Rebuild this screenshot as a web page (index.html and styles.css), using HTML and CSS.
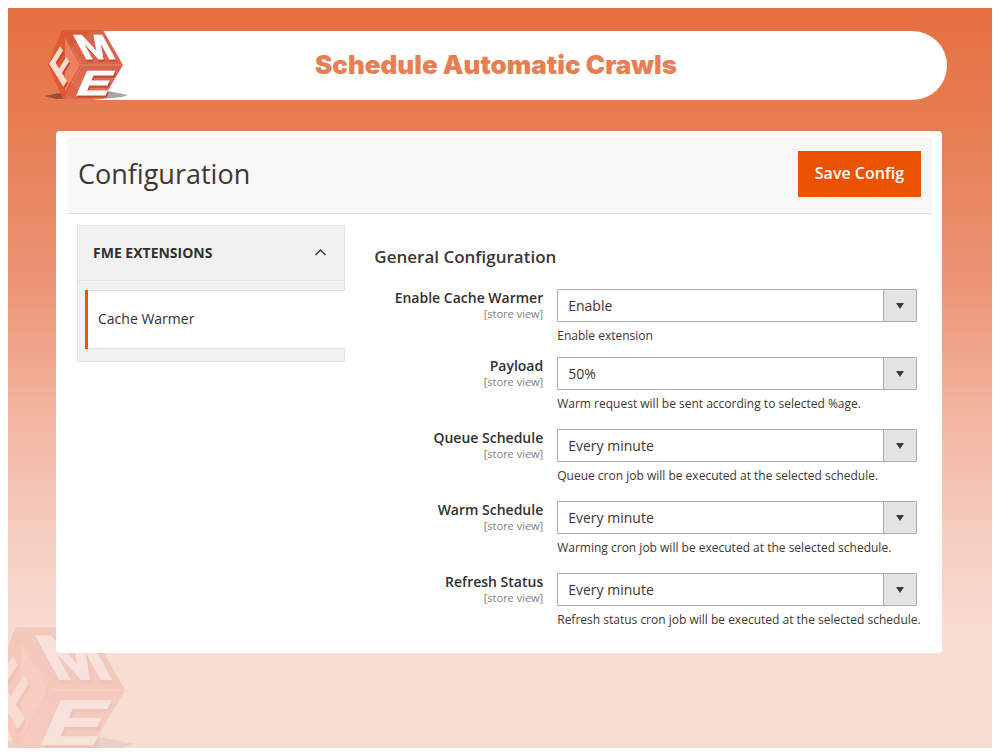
FILE: index.html
```html
<!DOCTYPE html>
<html lang="en">
<head>
<meta charset="utf-8">
<meta name="viewport" content="width=device-width, initial-scale=1">
<title>Schedule Automatic Crawls</title>
<link rel="stylesheet" href="styles.css">
</head>
<body>
<svg class="defs" aria-hidden="true">
  <linearGradient id="front" x1="0" y1="0" x2="0" y2="1"><stop offset="0" stop-color="#d9543c"/><stop offset="1" stop-color="#e0694c"/></linearGradient>
  <symbol id="cube" viewBox="44 26 86 78" overflow="visible">
    <path class="cube-shadow" d="M44 96 L66 92 V99 H56 Z M102 99 L108 91 L128 95 L122 97 Z"/>
    <path class="cube-left" d="M62 30 L82 65 L63 99 L48 65 Z"/>
    <path class="cube-top" d="M62 30 H103 L123 65 H82 Z"/>
    <path class="cube-front" d="M82 65 H123 L103 99 H63 Z"/>
    <path class="cube-inner" d="M65 38 L80 65 L65 92 Z"/>
    <path class="cube-edge" d="M82 65 H123"/>
    <g class="cube-letters">
      <text class="cube-side" transform="matrix(.62 -1 .6 .96 62 88)">F</text>
      <text transform="matrix(1.22 0 .57 1.05 84 59)">M</text>
      <text transform="matrix(1.5 0 -.45 1.05 74 95)">E</text>
    </g>
  </symbol>
</svg>
<div class="stage">
  <svg class="watermark" aria-hidden="true"><use href="#cube"/></svg>
  <header class="banner">
    <svg class="logo" role="img" aria-label="FME"><use href="#cube"/></svg>
    <h1 class="banner-title">Schedule Automatic Crawls</h1>
  </header>
  <main class="card">
    <div class="card-header">
      <h2 class="card-title">Configuration</h2>
      <button class="save" type="button">Save Config</button>
    </div>
    <div class="card-body">
      <nav class="sidebar">
        <button class="group" type="button" aria-expanded="true">
          <span>FME EXTENSIONS</span>
          <svg class="chevron" viewBox="0 0 12 8" aria-hidden="true"><path d="M1 7 L6 2 L11 7"/></svg>
        </button>
        <a class="group-item" href="#general">Cache Warmer</a>
      </nav>
      <form class="settings" id="general">
        <h3 class="settings-title">General Configuration</h3>
        <div class="row row-short">
          <label class="label" for="enable">Enable Cache Warmer <small class="scope">[store view]</small></label>
          <div class="field">
            <div class="picker"><select id="enable"><option>Enable</option></select><svg viewBox="0 0 8 6" aria-hidden="true"><path d="M0 0 H8 L4 6 Z"/></svg></div>
            <p class="note">Enable extension</p>
          </div>
        </div>
        <div class="row">
          <label class="label" for="payload">Payload <small class="scope">[store view]</small></label>
          <div class="field">
            <div class="picker"><select id="payload"><option>50%</option></select><svg viewBox="0 0 8 6" aria-hidden="true"><path d="M0 0 H8 L4 6 Z"/></svg></div>
            <p class="note">Warm request will be sent according to selected %age.</p>
          </div>
        </div>
        <div class="row">
          <label class="label" for="queue">Queue Schedule <small class="scope">[store view]</small></label>
          <div class="field">
            <div class="picker"><select id="queue"><option>Every minute</option></select><svg viewBox="0 0 8 6" aria-hidden="true"><path d="M0 0 H8 L4 6 Z"/></svg></div>
            <p class="note">Queue cron job will be executed at the selected schedule.</p>
          </div>
        </div>
        <div class="row">
          <label class="label" for="warm">Warm Schedule <small class="scope">[store view]</small></label>
          <div class="field">
            <div class="picker"><select id="warm"><option>Every minute</option></select><svg viewBox="0 0 8 6" aria-hidden="true"><path d="M0 0 H8 L4 6 Z"/></svg></div>
            <p class="note">Warming cron job will be executed at the selected schedule.</p>
          </div>
        </div>
        <div class="row">
          <label class="label" for="refresh">Refresh Status <small class="scope">[store view]</small></label>
          <div class="field">
            <div class="picker"><select id="refresh"><option>Every minute</option></select><svg viewBox="0 0 8 6" aria-hidden="true"><path d="M0 0 H8 L4 6 Z"/></svg></div>
            <p class="note">Refresh status cron job will be executed at the selected schedule.</p>
          </div>
        </div>
      </form>
    </div>
  </main>
</div>
</body>
</html>
```
FILE: styles.css
```css
* { box-sizing: border-box; }
body {
  margin: 0;
  padding: 8px;
  min-height: 100vh;
  display: flex;
  background: #fff;
  color: #41362f;
  font-family: "Open Sans", "Noto Sans", sans-serif;
}
h1, h2, h3, p { margin: 0; }
button, select { font-family: inherit; color: inherit; }
.defs { position: absolute; width: 0; height: 0; }

.stage {
  position: relative;
  flex: 1;
  padding: 23px 50px 95px 48px;
  overflow: hidden;
  background: linear-gradient(#e67040 0%, #e77f55 18%, #ec9676 38%, #f2b7a2 56%, #f6d0c2 73%, #f8ddd4 86%);
}
.watermark {
  position: absolute;
  left: -25px;
  bottom: -12px;
  width: 155px;
  height: 140px;
  overflow: visible;
  opacity: .16;
}

.banner {
  position: relative;
  display: flex;
  align-items: center;
  justify-content: center;
  height: 69px;
  margin: 0 -5px 31px 11px;
  border-radius: 35px;
  background: #fff;
}
.logo {
  position: absolute;
  left: -23px;
  top: -5px;
  width: 86px;
  height: 78px;
  overflow: visible;
}
.banner-title {
  padding: 0 22px 2px 0;
  color: #e77f54;
  font: 900 26px/32px Inter, "Liberation Sans", sans-serif;
}

.cube-shadow { fill: #000; opacity: .35; }
.cube-left { fill: #e2562c; opacity: .95; }
.cube-top { fill: #d9573a; opacity: .92; }
.cube-front { fill: url(#front); opacity: .92; }
.cube-inner { fill: #ea8260; }
.cube-edge { fill: none; stroke: #e58a6c; stroke-width: 1; }
.cube-letters {
  fill: #fff;
  stroke: #fff;
  stroke-width: 1;
  font: 700 33px "Liberation Sans", sans-serif;
  filter: drop-shadow(1px 2px 0 #c0462c);
}
.cube-side { fill: #fbdcd0; stroke: #fbdcd0; }

.card {
  position: relative;
  padding: 7px 10px 22px 11px;
  border-radius: 4px;
  background: #fff;
}
.card-header {
  display: flex;
  align-items: center;
  justify-content: space-between;
  height: 76px;
  padding: 0 11px 4px;
  border-bottom: 1px solid #e3e3e3;
  background: #f8f8f8;
}
.card-title { font-size: 27px; line-height: 40px; font-weight: 400; }
.save {
  height: 46px;
  padding: 0 17px 2px;
  border: 0;
  background: #eb5202;
  color: #fff;
  font-size: 16px;
  font-weight: 600;
}
.card-body {
  display: grid;
  grid-template-columns: minmax(180px, 45fr) minmax(0, 91fr);
  gap: 29px;
  align-items: start;
  padding: 11px 15px 0 10px;
}

.sidebar {
  padding-bottom: 12px;
  border: 1px solid #e3e3e3;
  background: #f1f1f1;
}
.group {
  display: flex;
  align-items: center;
  justify-content: space-between;
  width: 100%;
  height: 55px;
  padding: 0 17px 2px 15px;
  border: 0;
  border-bottom: 1px solid #e3e3e3;
  background: none;
  color: #303030;
  font-size: 14px;
  font-weight: 700;
}
.chevron { width: 13px; height: 8px; fill: none; stroke: #41362f; stroke-width: 1.5; }
.group-item {
  display: block;
  margin: 9px -1px 0 7px;
  padding: 19px 10px 20px;
  border-left: 3px solid #eb5202;
  background: #fff;
  box-shadow: inset 0 1px #e3e3e3, inset 0 -1px #e3e3e3;
  color: #303030;
  font-size: 14px;
  line-height: 20px;
  font-weight: 500;
  text-decoration: none;
}

.settings-title { padding: 20px 0; font-size: 17px; line-height: 24px; font-weight: 600; }
.row {
  display: grid;
  grid-template-columns: minmax(0, 169fr) minmax(0, 360fr);
  gap: 14px;
  min-height: 72px;
}
.row-short { min-height: 68px; }
.row:last-child { min-height: 58px; }
.label {
  color: #303030;
  font-size: 14px;
  line-height: 18px;
  font-weight: 600;
  text-align: right;
}
.scope { display: block; color: #808080; font-size: 11px; line-height: 14px; font-weight: 400; }
.picker { display: grid; align-items: center; }
.picker select, .picker svg { grid-area: 1 / 1; }
.picker select {
  appearance: none;
  width: 100%;
  height: 33px;
  padding: 0 42px 0 10px;
  border: 1px solid #adadad;
  border-radius: 1px;
  background: linear-gradient(90deg, #adadad 1px, #e3e3e3 1px) right / 33px 100% no-repeat #fff;
  font-size: 14px;
}
.picker svg {
  justify-self: end;
  width: 8px;
  height: 6px;
  margin-right: 13px;
  fill: #41362f;
  pointer-events: none;
}
.note { padding-top: 5px; font-size: 12px; line-height: 18px; white-space: nowrap; }
```
